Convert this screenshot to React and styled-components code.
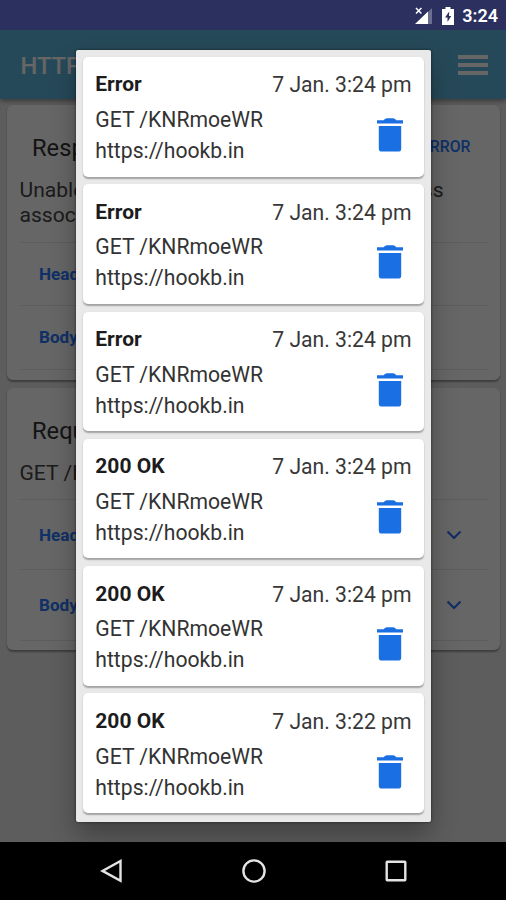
import React from 'react';
import styled, { createGlobalStyle } from 'styled-components';

const history = [
  { status: 'Error', date: '7 Jan. 3:24 pm' },
  { status: 'Error', date: '7 Jan. 3:24 pm' },
  { status: 'Error', date: '7 Jan. 3:24 pm' },
  { status: '200 OK', date: '7 Jan. 3:24 pm' },
  { status: '200 OK', date: '7 Jan. 3:24 pm' },
  { status: '200 OK', date: '7 Jan. 3:22 pm' },
];

const Chevron = () => (
  <svg width="16" height="10" viewBox="0 0 16 10" fill="none">
    <path d="M1.5 1.5 L8 8 L14.5 1.5" stroke="#2f70f5" strokeWidth="2.2" />
  </svg>
);

const Trash = () => (
  <svg width="26" height="34" viewBox="0 0 26 34" fill="#1a6fe3">
    <path d="M0 2.2 H6.6 Q8.2 0.2 10 0.2 H16 Q17.8 0.2 19.4 2.2 H26 V5.6 H0 Z" />
    <path d="M1.8 8 H24.2 V30.4 Q24.2 33.6 21 33.6 H5 Q1.8 33.6 1.8 30.4 Z" />
  </svg>
);

const StatusIcons = () => (
  <svg width="42" height="20" viewBox="0 0 42 20">
    <path d="M18 2 V18 H14 V6 Z" fill="#fff" opacity="0.3" />
    <path d="M14 5.5 V18 H1 Z" fill="#fff" />
    <path d="M2 2 L7.4 7.6 M7.4 2 L2 7.6" stroke="#fff" strokeWidth="1.5" />
    <path d="M31.5 1 H36.5 V3 H40 V19 H28 V3 H31.5 Z" fill="#fff" />
    <path d="M35.2 5.4 L31 11.6 H33.5 V16 L37.2 10 H35 Z" fill="#2b305f" />
  </svg>
);

const App = () => {
  return (
    <Screen>
      <GlobalStyle />
      <StatusBar>
        <StatusIcons />
        <Clock>3:24</Clock>
      </StatusBar>
      <Content>
        <Header>
          <AppTitle>HTTP Client</AppTitle>
          <Menu>
            <span />
            <span />
            <span />
          </Menu>
        </Header>
        <Panel height={275}>
          <PanelHead>
            <PanelTitle>Response</PanelTitle>
            <State>ERROR</State>
          </PanelHead>
          <Message>
            Unable to resolve host &quot;hookb.in&quot;: No address
            <br />
            associated with hostname
          </Message>
          <Section height={63.5}>Headers</Section>
          <Section height={63.5}>Body</Section>
          <End />
        </Panel>
        <Panel height={262}>
          <PanelHead>
            <PanelTitle>Request</PanelTitle>
          </PanelHead>
          <Message single>GET /KNRmoeWR</Message>
          <Section height={70.5} offset={2}>
            Headers
            <Chevron />
          </Section>
          <Section height={70.5} offset={1}>
            Body
            <Chevron />
          </Section>
          <End />
        </Panel>
        <Backdrop>
          <Dialog>
            {history.map((item, idx) => (
              <Entry key={idx}>
                <EntryHead>
                  <Status>{item.status}</Status>
                  <span>{item.date}</span>
                </EntryHead>
                <EntryBody>
                  <div>
                    <Line>GET /KNRmoeWR</Line>
                    <Line>https://hookb.in</Line>
                  </div>
                  <Trash />
                </EntryBody>
              </Entry>
            ))}
          </Dialog>
        </Backdrop>
      </Content>
      <NavBar>
        <svg width="24" height="26" viewBox="0 0 24 26" fill="none">
          <path d="M20.5 3 V22.8 L2.5 12.9 Z" stroke="#e4e4e4" strokeWidth="2.4" />
        </svg>
        <svg width="26" height="26" viewBox="0 0 26 26" fill="none">
          <circle cx="13" cy="13" r="10.6" stroke="#e4e4e4" strokeWidth="2.4" />
        </svg>
        <svg width="24" height="24" viewBox="0 0 24 24" fill="none">
          <rect x="2.7" y="2.7" width="18.6" height="18.6" rx="0.6" stroke="#e4e4e4" strokeWidth="2.4" />
        </svg>
      </NavBar>
    </Screen>
  )
}

export default App;

const GlobalStyle = createGlobalStyle`
  * {
    box-sizing: border-box;
  }
  body {
    margin: 0;
    font-family: Roboto, sans-serif;
  }
  svg {
    display: block;
    flex: none;
  }
`;
const Screen = styled.div`
  display: flex;
  flex-direction: column;
  width: 506px;
  height: 900px;
  overflow: hidden;
`;
const StatusBar = styled.div`
  display: flex;
  align-items: center;
  justify-content: flex-end;
  gap: 6px;
  height: 30px;
  padding: 1px 8px 0 0;
  background: #2b305f;
`;
const Clock = styled.div`
  color: #fff;
  font-size: 18px;
  font-weight: 600;
`;
const Content = styled.div`
  position: relative;
  flex: 1;
  display: flex;
  flex-direction: column;
  gap: 8px;
  background: #e9e9e9;
  overflow: hidden;
`;
const Header = styled.div`
  display: flex;
  align-items: center;
  justify-content: space-between;
  height: 68.5px;
  margin-bottom: -1.5px;
  padding: 2px 18.5px 0 20.5px;
  background: #5fb6df;
  box-shadow: 0 2px 5px rgba(0,0,0,0.4);
`;
const AppTitle = styled.div`
  padding-top: 1px;
  color: #fff;
  font-size: 23.7px;
  font-weight: 500;
`;
const Menu = styled.div`
  display: flex;
  flex-direction: column;
  gap: 4.5px;
  padding-bottom: 1px;
  span {
    width: 30px;
    height: 3.5px;
    background: #fff;
  }
`;
const Panel = styled.div`
  flex: none;
  height: ${({ height }) => height}px;
  margin: 0 6px 0 7px;
  padding: 13px 12px 0 13px;
  border-radius: 6px;
  background: #fff;
  box-shadow: 0 1.5px 2px rgba(0,0,0,0.35);
`;
const PanelHead = styled.div`
  display: flex;
  align-items: center;
  justify-content: space-between;
  height: 59px;
  padding: 0 17.5px 0 12px;
`;
const PanelTitle = styled.div`
  color: #333;
  font-size: 23.7px;
`;
const State = styled.div`
  margin-top: -2px;
  color: #2878ff;
  font-size: 15.8px;
  font-weight: 500;
`;
const Message = styled.div`
  height: ${({ single }) => (single ? '38.5px' : '64.5px')};
  margin-left: -0.5px;
  color: #444;
  font-size: 21.08px;
  line-height: 25px;
  white-space: nowrap;
`;
const Section = styled.div`
  display: flex;
  align-items: center;
  justify-content: space-between;
  height: ${({ height }) => height}px;
  padding: ${({ offset }) => offset || 0}px 26px 0 19px;
  border-top: 1px solid #e8e8e8;
  color: #2878ff;
  font-size: 17.1px;
  font-weight: 700;
`;
const End = styled.div`
  border-top: 1px solid #e8e8e8;
`;
const Backdrop = styled.div`
  position: absolute;
  inset: 0;
  display: flex;
  align-items: flex-start;
  padding: 20px 0 0 76px;
  background: rgba(0,0,0,0.6);
`;
const Dialog = styled.div`
  display: flex;
  flex-direction: column;
  gap: 7.8px;
  width: 355px;
  height: 771.5px;
  padding: 7px;
  border-radius: 2px;
  background: #e9e9e9;
  box-shadow: 0 0 3px rgba(0,0,0,0.55), 0 14px 26px rgba(0,0,0,0.3);
`;
const Entry = styled.div`
  height: 119.5px;
  padding: 12.4px 12.5px 0 12.3px;
  border-radius: 5px;
  background: #fff;
  box-shadow: 0 1.5px 1.5px rgba(0,0,0,0.3);
  color: #222;
  font-size: 21.15px;
`;
const EntryHead = styled.div`
  display: flex;
  justify-content: space-between;
  line-height: 31px;
  color: #383838;
`;
const Status = styled.div`
  color: #1c1c1c;
  font-size: 21px;
  font-weight: 700;
`;
const EntryBody = styled.div`
  display: flex;
  align-items: center;
  justify-content: space-between;
  padding: 3.8px 8.5px 0 0;
`;
const Line = styled.div`
  color: #333;
  line-height: 31px;
`;
const NavBar = styled.div`
  display: flex;
  align-items: center;
  justify-content: space-between;
  height: 58px;
  padding: 0 98px 0 100px;
  background: #000;
`;
